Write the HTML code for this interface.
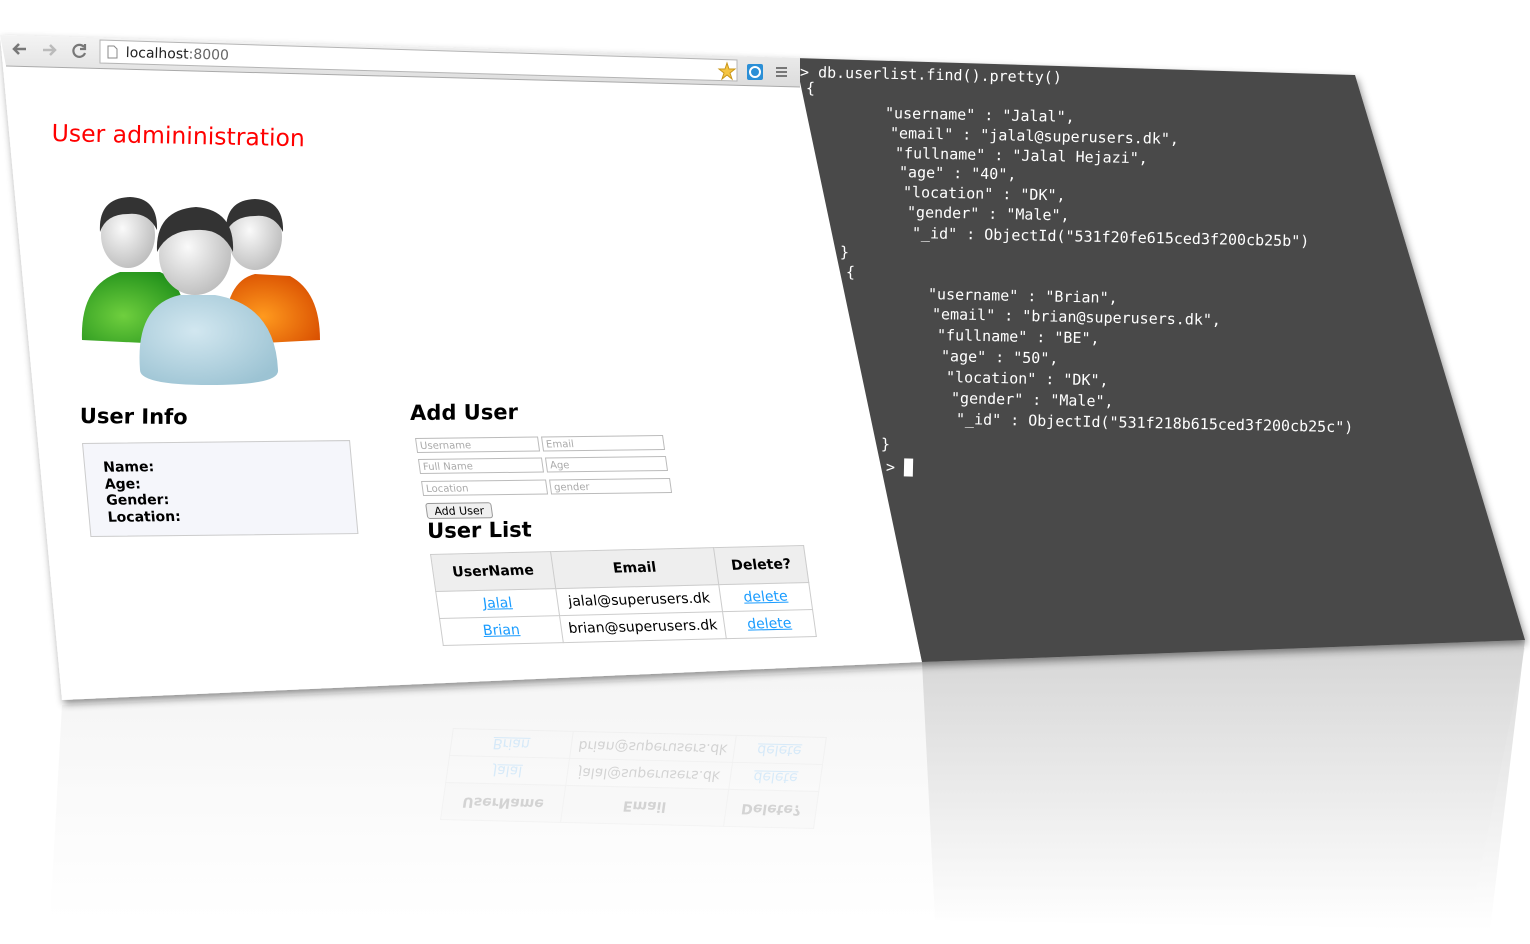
<!DOCTYPE html>
<html><head><meta charset="utf-8"><style>
html,body{margin:0;padding:0;background:#fff;width:1530px;height:944px;overflow:hidden;position:relative;font-family:"DejaVu Sans","Liberation Sans",sans-serif}
.a{position:absolute;white-space:pre;transform-origin:0 0}
.t{position:absolute;white-space:pre;color:#fff;font-family:"DejaVu Sans Mono","Liberation Mono",monospace;font-size:15px;letter-spacing:0;transform:rotate(1.2deg);transform-origin:0 50%;line-height:18px}
.inp{position:absolute;border:1px solid #bbb;background:#fff;color:#aaa;font-size:10px;height:15px;line-height:15px;padding-left:3px;box-sizing:border-box}
td,th{border:1px solid #ccc;text-align:center;padding:0;font-size:14px}
th{background:#eee;height:36px}
td{height:26px}
a{color:#1a9cff;text-decoration:underline}
</style></head><body>
<svg class="a" style="left:0;top:0" width="1530" height="944">
<defs>
<linearGradient id="bar" x1="0" y1="0" x2="0" y2="1"><stop offset="0" stop-color="#f4f4f4"/><stop offset="1" stop-color="#dcdcdc"/></linearGradient>
<linearGradient id="refl" x1="0" y1="0" x2="0" y2="1"><stop offset="0" stop-color="#ececec"/><stop offset="1" stop-color="#fff"/></linearGradient>
<linearGradient id="termr" x1="0" y1="0" x2="0" y2="1"><stop offset="0" stop-color="#c8c8c8"/><stop offset="1" stop-color="#fff"/></linearGradient>
<filter id="sh" x="-5%" y="-5%" width="110%" height="115%"><feDropShadow dx="2" dy="4" stdDeviation="4" flood-opacity="0.45"/></filter>
<radialGradient id="g1" cx="0.4" cy="0.6" r="0.7"><stop offset="0" stop-color="#6fcf3e"/><stop offset="1" stop-color="#1f8f1a"/></radialGradient>
<radialGradient id="g2" cx="0.4" cy="0.6" r="0.7"><stop offset="0" stop-color="#ff9a1e"/><stop offset="1" stop-color="#d84d00"/></radialGradient>
<radialGradient id="g3" cx="0.4" cy="0.4" r="0.7"><stop offset="0" stop-color="#d2e7f0"/><stop offset="1" stop-color="#9cc3d3"/></radialGradient>
<radialGradient id="hd" cx="0.4" cy="0.4" r="0.7"><stop offset="0" stop-color="#fafafa"/><stop offset="1" stop-color="#b8b8b8"/></radialGradient>
</defs>
<polygon points="62,705 920,668 1525,648 1470,920 50,920" fill="url(#refl)" opacity="0.6"/>
<polygon points="922,662 1525,640 1490,930 935,920" fill="url(#termr)" opacity="0.7"/>
<g filter="url(#sh)">
<polygon points="0,35 800,58 922,662 62,700" fill="#fff"/>
<polygon points="795,58 1355,75 1525,640 922,662" fill="#4a4a4a"/>
</g>
<polygon points="0,35 800,58 800,87 6,66" fill="url(#bar)"/>
<line x1="6" y1="66" x2="800" y2="87" stroke="#aaa"/>
<polygon points="100,40 737,60 737,81 100,63" fill="#fff" stroke="#b5b5b5"/>
<path d="M26,49 h-12 M19,44 l-5,5 5,5" stroke="#777" stroke-width="2.5" fill="none"/>
<path d="M43,50 h12 M50,45 l5,5 -5,5" stroke="#bbb" stroke-width="2.5" fill="none"/>
<path d="M84,47 a6,6 0 1 0 1,6 M85,44 v5 h-5" stroke="#777" stroke-width="2.2" fill="none"/>
<path d="M108,46 h6 l3,3 v9 h-9 z" stroke="#888" fill="#fff"/>
<polygon points="727,63 729,69 735,69 730,73 732,79 727,75 722,79 724,73 719,69 725,69" fill="#f5c542" stroke="#c9961a"/>
<rect x="747" y="64" width="16" height="16" rx="2" fill="#2b8fd6"/>
<circle cx="755" cy="72" r="5" fill="none" stroke="#fff" stroke-width="2"/>
<path d="M776,68 h11 M776,72 h11 M776,76 h11" stroke="#777" stroke-width="2"/>
<path d="M82,340 Q80,285 120,272 L160,272 Q190,285 185,345 Z" fill="url(#g1)"/>
<path d="M225,345 Q222,282 255,274 L290,276 Q320,292 320,340 Z" fill="url(#g2)"/>
<ellipse cx="128" cy="235" rx="27" ry="33" fill="url(#hd)"/>
<path d="M100,232 Q98,198 130,197 Q158,198 157,230 Q148,212 128,214 Q106,214 100,232Z" fill="#333"/>
<ellipse cx="255" cy="237" rx="27" ry="33" fill="url(#hd)"/>
<path d="M226,232 Q225,200 255,199 Q284,200 283,232 Q274,214 255,216 Q234,216 226,232Z" fill="#333"/>
<path d="M140,370 Q135,305 180,295 L215,295 Q275,305 278,370 Q280,385 210,385 Q140,385 140,370Z" fill="url(#g3)"/>
<ellipse cx="195" cy="255" rx="36" ry="40" fill="url(#hd)"/>
<path d="M157,252 Q155,210 196,207 Q235,210 233,252 Q222,228 196,230 Q168,230 157,252Z" fill="#333"/>
</svg>

<div class="a" style="left:126px;top:45px;font-size:14px;color:#222;transform:rotate(1.5deg)">localhost<span style="color:#666">:8000</span></div>
<div class="a" style="left:52px;top:119px;color:#f00;font-size:23.5px;transform:rotate(1.2deg)">User admininistration</div>
<div class="a" style="left:80px;top:404px;font-size:21px;font-weight:bold;transform:rotate(0.6deg)">User Info</div>
<div class="a" style="left:82px;top:443px;width:266px;height:92px;background:#f5f6fb;border:1px solid #ccc;transform:matrix(1,-0.011,0.09,1,0,0)">
<div style="position:absolute;left:18px;top:16px;font-size:14px;font-weight:bold;line-height:16.5px">Name:<br>Age:<br>Gender:<br>Location:</div></div>
<div class="a" style="left:410px;top:401px;font-size:21px;font-weight:bold;transform:rotate(-0.5deg)">Add User</div>
<div class="a" style="left:415px;top:438px;width:260px;height:85px;transform:matrix(1,-0.012,0.14,1,0,0)">
<div class="inp" style="left:0;top:0;width:123px">Username</div>
<div class="inp" style="left:126px;top:0;width:122px">Email</div>
<div class="inp" style="left:0;top:21px;width:124px">Full Name</div>
<div class="inp" style="left:127px;top:21px;width:121px">Age</div>
<div class="inp" style="left:0;top:43px;width:125px">Location</div>
<div class="inp" style="left:128px;top:43px;width:121px">gender</div>
<div style="position:absolute;left:1px;top:65px;width:66px;height:16px;border:1px solid #999;border-radius:3px;background:#f0f0f0;font-size:11px;line-height:15px;text-align:center;box-sizing:border-box">Add User</div>
</div>
<div class="a" style="left:427px;top:519px;font-size:21px;font-weight:bold;transform:rotate(-0.8deg)">User List</div>
<table class="a" style="left:430px;top:554px;border-collapse:collapse;width:374px;transform:matrix(1,-0.024,0.14,1,0,0)">
<tr><th style="width:119px">UserName</th><th style="width:162px">Email</th><th>Delete?</th></tr>
<tr><td><a>Jalal</a></td><td>jalal@superusers.dk</td><td><a>delete</a></td></tr>
<tr><td><a>Brian</a></td><td>brian@superusers.dk</td><td><a>delete</a></td></tr>
</table>

<div class="t" style="left:800px;top:63px">&gt; db.userlist.find().pretty()</div>
<div class="t" style="left:806px;top:79px">{</div>
<div class="t" style="left:885px;top:104px">"username" : "Jalal",</div>
<div class="t" style="left:890px;top:124px">"email" : "jalal@superusers.dk",</div>
<div class="t" style="left:895px;top:144px">"fullname" : "Jalal Hejazi",</div>
<div class="t" style="left:899px;top:163px">"age" : "40",</div>
<div class="t" style="left:903px;top:183px">"location" : "DK",</div>
<div class="t" style="left:907px;top:203px">"gender" : "Male",</div>
<div class="t" style="left:912px;top:224px">"_id" : ObjectId("531f20fe615ced3f200cb25b")</div>
<div class="t" style="left:840px;top:243px">}</div>
<div class="t" style="left:846px;top:263px">{</div>
<div class="t" style="left:928px;top:285px">"username" : "Brian",</div>
<div class="t" style="left:932px;top:305px">"email" : "brian@superusers.dk",</div>
<div class="t" style="left:937px;top:326px">"fullname" : "BE",</div>
<div class="t" style="left:941px;top:347px">"age" : "50",</div>
<div class="t" style="left:946px;top:368px">"location" : "DK",</div>
<div class="t" style="left:951px;top:389px">"gender" : "Male",</div>
<div class="t" style="left:956px;top:410px">"_id" : ObjectId("531f218b615ced3f200cb25c")</div>
<div class="t" style="left:881px;top:435px">}</div>
<div class="t" style="left:886px;top:458px">&gt; <span style="background:#fff">&nbsp;</span></div>

<table class="a" style="left:440px;top:820px;border-collapse:collapse;width:374px;opacity:0.15;transform:matrix(1,0.024,0.14,-1,0,0)">
<tr><th style="width:119px">UserName</th><th style="width:162px">Email</th><th>Delete?</th></tr>
<tr><td><a>Jalal</a></td><td>jalal@superusers.dk</td><td><a>delete</a></td></tr>
<tr><td><a>Brian</a></td><td>brian@superusers.dk</td><td><a>delete</a></td></tr>
</table>
</body></html>
